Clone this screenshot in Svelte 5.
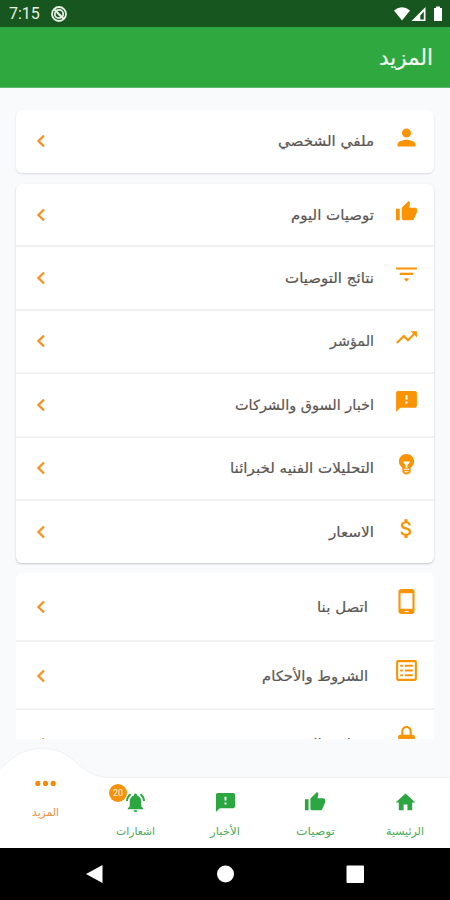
<script>
    const icons = {
        person: "M12 12c2.21 0 4-1.79 4-4s-1.79-4-4-4-4 1.79-4 4 1.79 4 4 4zm0 2c-2.67 0-8 1.34-8 4v2h16v-2c0-2.66-5.33-4-8-4z",
        thumb: "M1 21h4V9H1v12zm22-11c0-1.1-.9-2-2-2h-6.31l.95-4.57.03-.32c0-.41-.17-.79-.44-1.06L14.17 1 7.59 7.59C7.22 7.95 7 8.45 7 9v10c0 1.1.9 2 2 2h9c.83 0 1.54-.5 1.84-1.22l3.02-7.05c.09-.23.14-.47.14-.73v-2z",
        filter: "M2 5.3h20v2H2zM5.5 10.3h13v2.2H5.5zM10 15.5h4v1.3l-2 2-2-2z",
        trend: "M16 6l2.29 2.29-4.88 4.88-4-4L2 16.59 3.41 18l6-6 4 4 6.3-6.29L22 12V6z",
        feedback: "M20 2H4c-1.1 0-1.99.9-1.99 2L2 22l4-4h14c1.1 0 2-.9 2-2V4c0-1.1-.9-2-2-2zm-7 12h-2v-2h2v2zm0-4h-2V6h2v4z",
        bulb: "M12 2c-4.2 0-7.3 3.2-7.3 7.2 0 2.6 1.5 4.6 3.3 6v3.3c0 1.8 1.8 3.2 4 3.2s4-1.400 4-3.2v-3.3c1.8-1.4 3.3-3.4 3.3-6 0-4-3.1-7.2-7.3-7.2zM9 9h6v1l-2.2 2.600v2.500h-1.600v-2.500L9 10zM9.500 16.100h5v1h-5zM10 18.500h4v1h-4z",
        dollar: "M11.8 10.9c-2.27-.59-3-1.2-3-2.15 0-1.09 1.01-1.85 2.7-1.85 1.78 0 2.44.85 2.5 2.1h2.21c-.07-1.72-1.12-3.3-3.21-3.81V3h-3v2.16c-1.94.42-3.5 1.68-3.5 3.61 0 2.31 1.91 3.46 4.7 4.13 2.5.6 3 1.48 3 2.41 0 .69-.49 1.79-2.7 1.79-2.06 0-2.87-.92-2.98-2.1h-2.2c.12 2.19 1.76 3.42 3.68 3.83V21h3v-2.15c1.95-.37 3.5-1.5 3.5-3.55 0-2.84-2.43-3.81-4.7-4.4z",
        phone: "M17 0H7C5.3 0 4.3 1 4.3 2.6v18.8C4.3 23 5.3 24 7 24h10c1.7 0 2.7-1 2.7-2.6V2.6C19.7 1 18.7 0 17 0zM6.3 4h11.4v15H6.3zM10 21h4v1h-4z",
        list: "M20 2H4c-1.1 0-2 .9-2 2v16c0 1.1.9 2 2 2h16c1.1 0 2-.9 2-2V4c0-1.1-.9-2-2-2zM4 4h16v16H4zM6 6.5v2h2.5v-2zM10.5 6.5v2H18v-2zM6 11v2h2.5v-2zM10.5 11v2H18v-2zM6 15.5v2h2.5v-2zM10.5 15.5v2H18v-2z",
        lock: "M18 8.5h-1V5c0-2.760-2.240-5-5-5S7 2.240 7 5v3.500H6c-1.100 0-2 .9-2 2V19c0 1.100.9 2 2 2h12c1.100 0 2-.9 2-2v-8.500c0-1.100-.9-2-2-2zM9 8.500V5c0-1.700 1.300-3.100 3-3.100s3 1.400 3 3.100v3.500z",
        home: "M10 20v-6h4v6h5v-8h3.3L12 2.500 1.7 12H5v8z",
        bell: "M7.58 4.08L6.15 2.65C3.75 4.48 2.17 7.3 2.03 10.5h2c.15-2.65 1.51-4.97 3.55-6.42zM19.97 10.5h2c-.15-3.2-1.73-6.02-4.12-7.85l-1.42 1.43c2.02 1.45 3.39 3.77 3.54 6.42zM18 11c0-3.07-1.64-5.64-4.5-6.32V4c0-.83-.67-1.5-1.5-1.5s-1.5.67-1.5 1.5v.68C7.63 5.36 6 7.92 6 11v5l-2 2v1h16v-1l-2-2v-5zM12 22c1.1 0 2-.9 2-2h-4c0 1.1.9 2 2 2z",
        dots: "M4 9.2a2.7 2.7 0 1 0 0 5.4 2.7 2.7 0 0 0 0-5.4zM12 9.2a2.7 2.7 0 1 0 0 5.4 2.7 2.7 0 0 0 0-5.4zM20 9.2a2.7 2.7 0 1 0 0 5.4 2.7 2.7 0 0 0 0-5.4z"
    };

    // width is the length each label is fitted to
    const groups = [
        { name: "profile", items: [
            { icon: "person", text: "ملفي الشخصي", width: 96 }
        ] },
        { name: "market", items: [
            { icon: "thumb", text: "توصيات اليوم", width: 83 },
            { icon: "filter", text: "نتائج التوصيات", width: 89 },
            { icon: "trend", text: "المؤشر", width: 44 },
            { icon: "feedback", text: "اخبار السوق والشركات", width: 139 },
            { icon: "bulb", text: "التحليلات الفنيه لخبرائنا", width: 144 },
            { icon: "dollar", text: "الاسعار", width: 45 }
        ] },
        { name: "about", items: [
            { icon: "phone", text: "اتصل بنا", width: 51 },
            { icon: "list", text: "الشروط والأحكام", width: 106 },
            { icon: "lock", text: "سياسة الخصوصية", width: 110 }
        ] }
    ];

    const tabs = [
        { icon: "home", text: "الرئيسية", width: 38 },
        { icon: "thumb", text: "توصيات", width: 39 },
        { icon: "feedback", text: "الأخبار", width: 30 },
        { icon: "bell", text: "اشعارات", width: 39, badge: 20 },
        { icon: "dots", text: "المزيد", width: 27, active: true }
    ];
</script>

{#snippet icon(name)}
    <svg class="icon {name}" viewBox="0 0 24 24"><path fill-rule="evenodd" d={icons[name]} /></svg>
{/snippet}

{#snippet label(text, width, height, baseline)}
    <svg class="label" {width} {height}>
        <text x={width} y={baseline} textLength={width} lengthAdjust="spacingAndGlyphs">{text}</text>
    </svg>
{/snippet}

<div class="screen">
    <div class="status">
        <span class="time">7:15</span>
        <svg class="dnd" width="16" height="16" viewBox="0 0 16 16">
            <circle cx="8" cy="8" r="7" />
            <circle cx="8" cy="8" r="4.2" />
            <path d="M3 3l10 10M6 6.5l4 4" />
        </svg>
        <svg class="signals" width="50" height="16" viewBox="0 0 50 16">
            <path d="M1 4.5Q9 -2 17 4.5L9 14.5z" />
            <path fill-rule="evenodd" d="M32.5 1v14h-14zM30.8 5.500v8h-3.500V9.500z" />
            <path d="M41 2h2V.5h4V2h2v13H41z" />
        </svg>
    </div>

    <header>{@render label("المزيد", 54, 34, 22)}</header>

    <main>
        {#each groups as group}
            <section class="card {group.name}">
                {#each group.items as item}
                    <div class="row">
                        {@render icon(item.icon)}
                        {@render label(item.text, item.width, 26, 18)}
                        <svg class="chevron" width="10" height="14" viewBox="0 0 10 14"><path d="M8 1.5L2.5 7 8 12.5" /></svg>
                    </div>
                {/each}
            </section>
        {/each}
    </main>

    <nav>
        <svg class="wave" width="450" height="102" viewBox="0 0 450 102">
            <path d="M-2 24C8 18 16 2.500 43 2.500C76 2.500 78 31.500 110 31.500H452V104H-2z" />
        </svg>
        {#each tabs as tab}
            <div class="tab" class:active={tab.active}>
                {@render icon(tab.icon)}
                {#if tab.badge}<span class="badge">{tab.badge}</span>{/if}
                {@render label(tab.text, tab.width, 20, 13)}
            </div>
        {/each}
    </nav>

    <div class="system">
        <svg width="450" height="52" viewBox="0 0 450 52">
            <path d="M86 26L102.5 17V35z" />
            <circle cx="225.5" cy="26" r="8.5" />
            <rect x="346.5" y="17.5" width="17.5" height="17.5" rx="1" />
        </svg>
    </div>
</div>

<style>
    .screen {
        width: 450px;
        height: 900px;
        display: flex;
        flex-direction: column;
        overflow: hidden;
        direction: rtl;
        background: #f9fafc;
        font-family: "DejaVu Sans", sans-serif;
    }

    svg {
        display: block;
        flex-shrink: 0;
    }

    .status {
        direction: ltr;
        display: flex;
        align-items: center;
        height: 27px;
        padding: 0 7px 0 9px;
        box-sizing: border-box;
        background: #17561f;
        color: #e8f0e5;
        font: 16px Roboto, sans-serif;
    }

    .dnd {
        margin-left: 11px;
        fill: none;
        stroke: #e8f0e5;
        stroke-width: 1.8;
    }

    .signals {
        margin-left: auto;
        fill: #fff;
    }

    header {
        height: 61px;
        box-sizing: border-box;
        padding: 16px 17px 0;
        background: #2fa93f;
        border-bottom: 1px solid #62b86b;
    }

    .label {
        overflow: visible;
        fill: #5b5653;
        stroke: #5b5653;
        stroke-width: .2px;
        font-size: 14px;
    }

    header .label {
        fill: #f3faf1;
        stroke: #f3faf1;
        font-size: 22px;
    }

    main {
        height: 651px;
        box-sizing: border-box;
        padding: 22px 16px 0;
        overflow: hidden;
    }

    .card {
        background: #fff;
        border-radius: 6px;
        box-shadow: 0 1px 2px #d9dadd;
        overflow: hidden;
    }

    .profile {
        height: 63px;
        margin-bottom: 11px;
    }

    .market {
        height: 379px;
        margin-bottom: 10px;
        box-shadow: 0 1px 2px #c4c5c8;
    }

    .about {
        box-shadow: none;
    }

    .row {
        display: flex;
        align-items: center;
        height: 63.4px;
        box-sizing: border-box;
        padding: 0 15px 0 20px;
        border-bottom: 2px solid #f0f1f2;
    }

    .row:last-child {
        border-bottom-color: transparent;
    }

    .about .row {
        height: 68.6px;
        padding-top: 2px;
    }

    .row .icon {
        width: 25px;
        height: 25px;
        margin-bottom: 7px;
        fill: #fa9405;
    }

    .row .thumb {
        width: 23px;
        height: 23px;
        margin-right: 1px;
        margin-left: 1px;
    }

    .row .person {
        width: 27px;
        height: 27px;
        margin-right: -1px;
        margin-left: -1px;
    }

    .about .row .icon {
        margin-bottom: 11px;
    }

    .row .label {
        margin-right: 20px;
    }

    .about .row .label {
        margin-right: 26px;
    }

    .chevron {
        margin-right: auto;
        fill: none;
        stroke: #f39425;
        stroke-width: 2.4;
    }

    nav {
        position: relative;
        display: flex;
        height: 109px;
        overflow: hidden;
    }

    .wave {
        position: absolute;
        left: 0;
        bottom: 0;
        fill: #fff;
        stroke: #f0f1f3;
    }

    .tab {
        position: relative;
        width: 90px;
        display: flex;
        flex-direction: column;
        align-items: center;
        padding-top: 52px;
        box-sizing: border-box;
    }

    .tab.active {
        padding-top: 33px;
    }

    .tab .icon {
        width: 23px;
        height: 23px;
        fill: #2ba640;
    }

    .tab .thumb {
        width: 22px;
        height: 22px;
        margin-bottom: 1px;
    }

    .tab .label {
        margin-top: 8px;
        fill: #4ba957;
        stroke: none;
        font-size: 11px;
    }

    .tab.active .icon {
        fill: #f28a0b;
    }

    .tab.active .label {
        fill: #ee9142;
    }

    .badge {
        position: absolute;
        left: 19px;
        top: 45px;
        width: 18px;
        height: 18px;
        border-radius: 50%;
        background: #f5920c;
        color: #fff0dc;
        font: 9px/18px Roboto, sans-serif;
        text-align: center;
    }

    .system {
        height: 52px;
        background: #000;
    }

    .system svg {
        fill: #fff;
    }
</style>
